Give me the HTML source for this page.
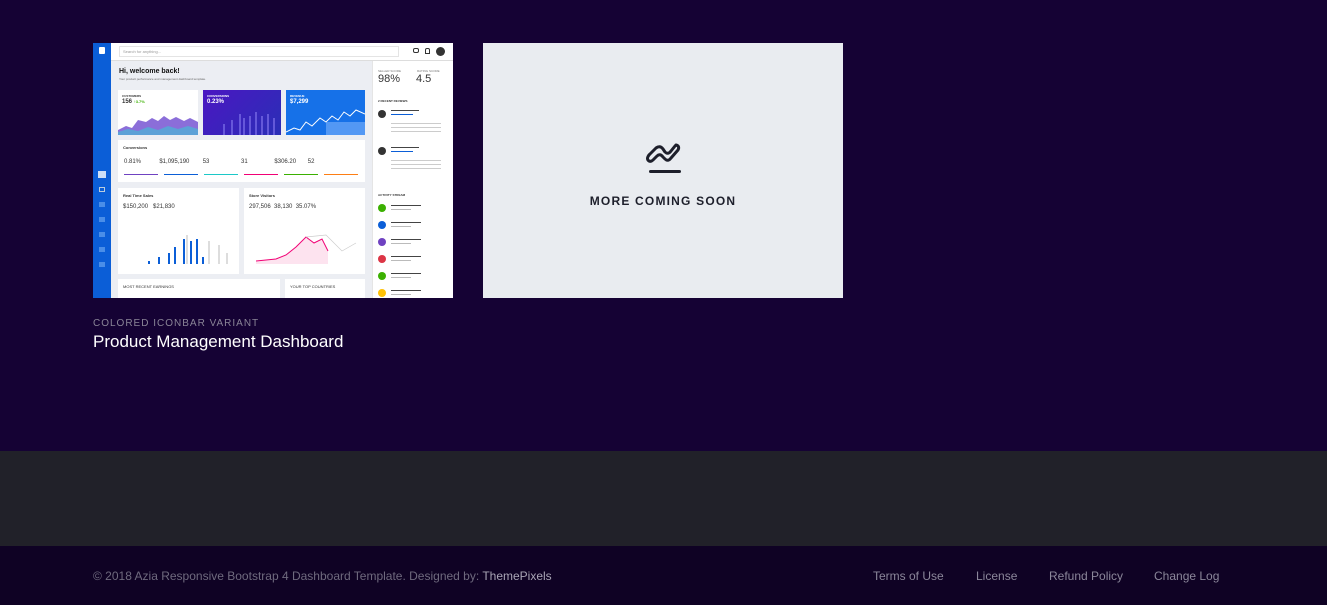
<!DOCTYPE html>
<html><head><meta charset="utf-8"><style>
*{margin:0;padding:0;box-sizing:border-box}
body{width:1327px;height:605px;background:#150234;font-family:"Liberation Sans",sans-serif;position:relative;overflow:hidden}
.abs{position:absolute}
.thumb{left:93px;top:43px;width:360px;height:255px;background:#eceef3;overflow:hidden}
.card{position:absolute;background:#fff;overflow:hidden}
.t{position:absolute;font-size:4px;color:#333;white-space:nowrap}
.ln{position:absolute;height:2px;background:#ccc}
</style></head><body>
<div class="abs thumb">
  <div class="abs" style="left:0;top:0;width:18px;height:255px;background:#0b5ed7"></div>
  <div class="abs" style="left:6px;top:4px;width:6px;height:7px;background:#fff;border-radius:1px"></div>
  <div class="abs" style="left:5px;top:128px;width:8px;height:7px;background:#fff;opacity:.8"></div>
  <div class="abs" style="left:6px;top:144px;width:6px;height:5px;border:1px solid #bcd;box-shadow:0 15px 0 #4a8ee8,0 30px 0 #4a8ee8,0 45px 0 #4a8ee8,0 60px 0 #4a8ee8,0 75px 0 #4a8ee8"></div>
  <div class="abs" style="left:18px;top:0;width:342px;height:18px;background:#fff;border-bottom:1px solid #ddd"></div>
  <div class="abs" style="left:26px;top:3px;width:280px;height:11px;border:1px solid #e4e4e4"></div>
  <div class="t" style="left:30px;top:6px;color:#999">Search for anything...</div>
  <div class="abs" style="left:320px;top:5px;width:6px;height:5px;border:1px solid #333;border-radius:2px"></div>
  <div class="abs" style="left:332px;top:5px;width:5px;height:6px;border:1px solid #333;border-radius:2px 2px 0 0"></div>
  <div class="abs" style="left:343px;top:4px;width:9px;height:9px;border-radius:50%;background:#333"></div>
  <div class="abs" style="left:279px;top:18px;width:81px;height:237px;background:#fff;border-left:1px solid #e5e5e5"></div>
  <div class="t" style="left:285px;top:26px;font-size:3px;color:#777">SELLER SCORE</div>
  <div class="t" style="left:324px;top:26px;font-size:3px;color:#777">RATING SCORE</div>
  <div class="t" style="left:285px;top:30px;font-size:11px">98%</div>
  <div class="t" style="left:323px;top:30px;font-size:11px">4.5</div>
  <div class="t" style="left:285px;top:56px;font-size:3px;font-weight:bold">2 RECENT REVIEWS</div>
  <div class="abs" style="left:285px;top:67px;width:8px;height:8px;border-radius:50%;background:#333;box-shadow:0 37px 0 #333"></div>
  <div class="ln" style="left:298px;top:67px;width:28px;height:1px;background:#444"></div>
  <div class="ln" style="left:298px;top:71px;width:22px;height:1px;background:#0b5ed7"></div>
  <div class="ln" style="left:298px;top:80px;width:50px;height:1px;box-shadow:0 4px 0 #ccc,0 8px 0 #ccc"></div>
  <div class="ln" style="left:298px;top:104px;width:28px;height:1px;background:#444"></div>
  <div class="ln" style="left:298px;top:108px;width:22px;height:1px;background:#0b5ed7"></div>
  <div class="ln" style="left:298px;top:117px;width:50px;height:1px;box-shadow:0 4px 0 #ccc,0 8px 0 #ccc"></div>
  <div class="t" style="left:285px;top:150px;font-size:3px;font-weight:bold">ACTIVITY STREAM</div>
  <div class="abs" style="left:285px;top:161px;width:8px;height:8px;border-radius:50%;background:#3bb001;box-shadow:0 17px 0 #0b5ed7,0 34px 0 #6f42c1,0 51px 0 #dc3545,0 68px 0 #3bb001,0 85px 0 #ffc107"></div>
  <div class="ln" style="left:298px;top:162px;width:30px;height:1px;background:#444;box-shadow:0 17px 0 #444,0 34px 0 #444,0 51px 0 #444,0 68px 0 #444,0 85px 0 #444"></div>
  <div class="ln" style="left:298px;top:166px;width:20px;height:1px;background:#bbb;box-shadow:0 17px 0 #bbb,0 34px 0 #bbb,0 51px 0 #bbb,0 68px 0 #bbb,0 85px 0 #bbb"></div>
  <div class="t" style="left:26px;top:25px;font-size:7px;font-weight:bold;color:#111">Hi, welcome back!</div>
  <div class="t" style="left:26px;top:34px;font-size:3px;color:#666">Your product performance and management dashboard template.</div>
  <div class="card" style="left:25px;top:47px;width:80px;height:45px">
   <svg class="abs" style="left:0;top:22px" width="80" height="23"><path d="M0 18 L8 14 14 16 20 8 28 10 34 6 40 9 46 4 52 8 58 5 66 9 72 6 80 10 L80 23 0 23Z" fill="#8b6ed9"/><path d="M0 20 L10 17 20 19 30 15 40 18 50 14 60 17 70 14 80 17 L80 23 0 23Z" fill="#3ec3d6" opacity=".6"/></svg>
   <div class="t" style="left:4px;top:4px;font-size:3px;font-weight:bold">CUSTOMERS</div>
   <div class="t" style="left:4px;top:9px;font-size:6px;font-weight:bold">156 <span style="color:#3bb001;font-size:4px">↑3.7%</span></div></div>
  <div class="card" style="left:110px;top:47px;width:78px;height:45px;background:linear-gradient(135deg,#4b16c2,#2a2fb6)">
   <svg class="abs" style="left:0;top:20px" width="78" height="25"><g fill="#7a6de8" opacity=".7"><rect x="20" y="14" width="2" height="11"/><rect x="28" y="10" width="2" height="15"/><rect x="36" y="4" width="2" height="21"/><rect x="40" y="8" width="2" height="17"/><rect x="46" y="6" width="2" height="19"/><rect x="52" y="2" width="2" height="23"/><rect x="58" y="6" width="2" height="19"/><rect x="64" y="4" width="2" height="21"/><rect x="70" y="8" width="2" height="17"/></g></svg>
   <div class="t" style="left:4px;top:4px;font-size:3px;color:#fff;font-weight:bold">CONVERSIONS</div>
   <div class="t" style="left:4px;top:9px;font-size:6px;color:#fff;font-weight:bold">0.23%</div></div>
  <div class="card" style="left:193px;top:47px;width:79px;height:45px;background:#1671e8">
   <svg class="abs" style="left:0;top:18px" width="79" height="27"><path d="M0 24 L8 20 14 22 20 14 26 18 34 10 40 14 46 8 52 12 58 4 64 8 70 2 79 6" fill="none" stroke="#fff" stroke-width="1"/><g fill="#8fc0ff" opacity=".5"><rect x="40" y="14" width="39" height="13"/></g></svg>
   <div class="t" style="left:4px;top:4px;font-size:3px;color:#fff;font-weight:bold">REVENUE</div>
   <div class="t" style="left:4px;top:9px;font-size:6px;color:#fff;font-weight:bold">$7,299</div></div>
  <div class="card" style="left:25px;top:97px;width:247px;height:42px"><div class="t" style="left:5px;top:5px;font-weight:bold">Conversions</div>
   <div class="t" style="left:6px;top:19px;font-size:6px">0.81%  &nbsp;&nbsp;&nbsp;&nbsp;&nbsp;&nbsp;&nbsp;&nbsp;&nbsp; $1,095,190 &nbsp;&nbsp;&nbsp;&nbsp;&nbsp;&nbsp; 53 &nbsp;&nbsp;&nbsp;&nbsp;&nbsp;&nbsp;&nbsp;&nbsp;&nbsp;&nbsp;&nbsp;&nbsp;&nbsp;&nbsp;&nbsp;&nbsp;&nbsp; 31 &nbsp;&nbsp;&nbsp;&nbsp;&nbsp;&nbsp;&nbsp;&nbsp;&nbsp;&nbsp;&nbsp;&nbsp;&nbsp;&nbsp; $306.20 &nbsp;&nbsp;&nbsp;&nbsp;&nbsp; 52</div>
   <div class="abs" style="left:6px;top:34px;width:34px;height:1px;background:#6f42c1"></div><div class="abs" style="left:46px;top:34px;width:34px;height:1px;background:#0b5ed7"></div><div class="abs" style="left:86px;top:34px;width:34px;height:1px;background:#1cc8c8"></div><div class="abs" style="left:126px;top:34px;width:34px;height:1px;background:#f10075"></div><div class="abs" style="left:166px;top:34px;width:34px;height:1px;background:#3bb001"></div><div class="abs" style="left:206px;top:34px;width:34px;height:1px;background:#fd7e14"></div></div>
  <div class="card" style="left:25px;top:145px;width:121px;height:86px"><div class="t" style="left:5px;top:5px;font-weight:bold">Real Time Sales</div><div class="t" style="left:5px;top:16px;font-size:6px">$150,200 &nbsp; $21,830</div>
   <svg class="abs" style="left:20px;top:45px" width="95" height="32"><g fill="#0b5ed7"><rect x="10" y="28" width="2" height="3"/><rect x="20" y="24" width="2" height="7"/><rect x="30" y="20" width="2" height="11"/><rect x="36" y="14" width="2" height="17"/><rect x="45" y="6" width="2" height="25"/><rect x="52" y="8" width="2" height="23"/><rect x="58" y="6" width="2" height="25"/><rect x="64" y="24" width="2" height="7"/></g><g fill="#ddd"><rect x="48" y="2" width="2" height="29"/><rect x="70" y="8" width="2" height="23"/><rect x="80" y="12" width="2" height="19"/><rect x="88" y="20" width="2" height="11"/></g></svg></div>
  <div class="card" style="left:151px;top:145px;width:121px;height:86px"><div class="t" style="left:5px;top:5px;font-weight:bold">Store Visitors</div><div class="t" style="left:5px;top:16px;font-size:6px">297,506 &nbsp;38,130 &nbsp;35.07%</div>
   <svg class="abs" style="left:12px;top:45px" width="105" height="32"><path d="M0 28 L20 26 30 22 40 14 50 4 58 10 66 6 72 18 L72 31 0 31Z" fill="#fde3ef"/><polyline points="0,28 20,26 30,22 40,14 50,4 58,10 66,6 72,18" fill="none" stroke="#f10075" stroke-width="1"/><polyline points="50,4 70,2 86,18 100,10" fill="none" stroke="#ccc" stroke-width=".7"/></svg></div>
  <div class="card" style="left:25px;top:236px;width:162px;height:25px"><div class="t" style="left:5px;top:5px">MOST RECENT EARNINGS</div></div>
  <div class="card" style="left:192px;top:236px;width:80px;height:25px"><div class="t" style="left:5px;top:5px">YOUR TOP COUNTRIES</div></div>
</div>
<div class="abs" style="left:483px;top:43px;width:360px;height:255px;background:#e9ecf0">
  <svg class="abs" style="left:162px;top:97px" width="36" height="36" viewBox="0 0 36 36"><path d="M4 15 L11 8 Q15 5 18 9 L20 12 Q23 15 26 11 L30 6" fill="none" stroke="#1d1f2b" stroke-width="3" stroke-linecap="round" stroke-linejoin="round"/><path d="M4 15 Q1 19 4 21 Q6 22 8 20 L12 16 Q15 13 18 17 L20 19 Q23 22 26 18 L33 10 Q35 6 31 5" fill="none" stroke="#1d1f2b" stroke-width="3" stroke-linecap="round" stroke-linejoin="round"/><rect x="4" y="30" width="32" height="3" rx="1.5" fill="#1d1f2b"/></svg>
  <div class="abs" style="left:0;top:151px;width:360px;text-align:center;font-size:12px;font-weight:bold;letter-spacing:1.2px;color:#1d1f2b">MORE COMING SOON</div>
</div>
<div class="abs" style="left:93px;top:318px;font-size:10px;letter-spacing:1px;color:#8a8597">COLORED ICONBAR VARIANT</div>
<div class="abs" style="left:93px;top:332px;font-size:17px;color:#fff">Product Management Dashboard</div>
<div class="abs" style="left:0;top:451px;width:1327px;height:95px;background:#212129"></div>
<div class="abs" style="left:0;top:546px;width:1327px;height:59px;background:#0f0224"></div>
<div class="abs" style="left:93px;top:569px;font-size:12px;color:#6f6a7e">© 2018 Azia Responsive Bootstrap 4 Dashboard Template. Designed by: <span style="color:#a9a5b5">ThemePixels</span></div>
<div class="abs" style="left:873px;top:569px;font-size:12px;color:#8b879a">Terms of Use</div>
<div class="abs" style="left:976px;top:569px;font-size:12px;color:#8b879a">License</div>
<div class="abs" style="left:1049px;top:569px;font-size:12px;color:#8b879a">Refund Policy</div>
<div class="abs" style="left:1154px;top:569px;font-size:12px;color:#8b879a">Change Log</div>
</body></html>
